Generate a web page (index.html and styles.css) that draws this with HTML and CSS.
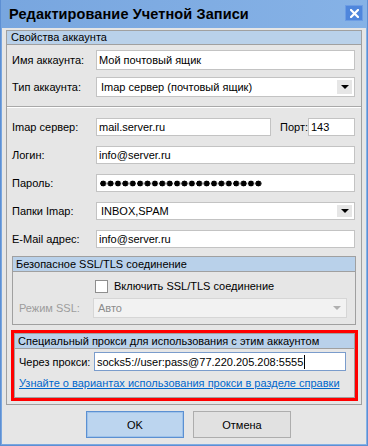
FILE: index.html
```html
<!DOCTYPE html>
<html lang="ru">
<head>
<meta charset="utf-8">
<title>Редактирование Учетной Записи</title>
<link rel="stylesheet" href="styles.css">
</head>
<body>
<div class="window">
  <div class="titlebar">
    <span class="title">Редактирование Учетной Записи</span>
    <span class="close"><svg width="9" height="9" viewBox="0 0 9 9"><path d="M1 1L8 8M8 1L1 8" stroke="#fff" stroke-width="2.2" stroke-linecap="square"/></svg></span>
  </div>
  <div class="client">
    <div class="group outer">
      <div class="group-head">Свойства аккаунта</div>
      <div class="group-body">
        <div class="row tall first"><span class="lbl">Имя аккаунта:</span><div class="field grow">Мой почтовый ящик</div></div>
        <div class="row tall second"><span class="lbl">Тип аккаунта:</span><div class="field grow select"><span class="val">Imap сервер (почтовый ящик)</span><span class="arrow"></span></div></div>
        <div class="sep"></div>
        <div class="row after-sep"><span class="lbl">Imap сервер:</span><div class="field server">mail.server.ru</div><span class="port-lbl">Порт:</span><div class="field port">143</div></div>
        <div class="row"><span class="lbl">Логин:</span><div class="field grow">info@server.ru</div></div>
        <div class="row"><span class="lbl">Пароль:</span><div class="field grow"><span class="dots"></span></div></div>
        <div class="row"><span class="lbl">Папки Imap:</span><div class="field grow select"><span class="val">INBOX,SPAM</span><span class="arrow"></span></div></div>
        <div class="row"><span class="lbl">E-Mail адрес:</span><div class="field grow">info@server.ru</div></div>

        <div class="group ssl">
          <div class="group-head">Безопасное SSL/TLS соединение</div>
          <div class="check-row"><span class="checkbox"></span><span>Включить SSL/TLS соединение</span></div>
          <div class="ssl-row"><span class="lbl-ssl">Режим SSL:</span><div class="field grow select disabled"><span class="val">Авто</span><span class="arrow"></span></div></div>
        </div>

        <div class="group proxy">
          <div class="group-head">Специальный прокси для использования с этим аккаунтом</div>
          <div class="proxy-row"><span class="lbl-proxy">Через прокси:</span><div class="field grow focused">socks5://user:pass@77.220.205.208:5555<span class="caret"></span></div></div>
          <a class="help-link" href="#">Узнайте о вариантах использования прокси в разделе справки</a>
        </div>
      </div>
    </div>
    <div class="buttons">
      <button class="btn default">OK</button>
      <button class="btn">Отмена</button>
    </div>
  </div>
</div>
</body>
</html>
```

FILE: styles.css
```css
* { box-sizing: border-box; }
html, body { margin: 0; padding: 0; }
body {
  width: 368px;
  height: 446px;
  overflow: hidden;
  font-family: "Liberation Sans", Arial, sans-serif;
  font-size: 11px;
  color: #000;
  background: #7eabe1;
}
.window {
  width: 368px;
  height: 446px;
  display: flex;
  flex-direction: column;
  background: linear-gradient(90deg, #78a6df, #86b2e6);
  border: 1px solid #5d8fd3;
  border-top: none;
}
.titlebar {
  height: 28px;
  display: flex;
  align-items: flex-start;
  padding-left: 8px;
}
.title {
  font-weight: bold;
  font-size: 14.5px;
  line-height: 16px;
  margin-top: 6px;
  color: #000;
  letter-spacing: 0.1px;
}
.close {
  margin-left: auto;
  margin-right: 4px;
  margin-top: 5px;
  width: 18px;
  height: 16px;
  background: #4f86dc;
  border: 1px solid #6d9de4;
  display: flex;
  align-items: center;
  justify-content: center;
}
.client {
  flex: 1;
  margin: 0 1px 1px 1px;
  background: #e6e6e6;
  padding: 2px 4px 0 4px;
  display: flex;
  flex-direction: column;
}
.group {
  border: 1px solid #a0a0a0;
}
.group-head {
  height: 14px;
  line-height: 13px;
  background: #b9d1ea;
  border-bottom: 1px solid #a0a0a0;
  padding-left: 4px;
  white-space: nowrap;
}
.group-body {
  padding: 0 6px 6px 5px;
}
.row {
  display: flex;
  align-items: center;
  height: 18px;
  margin-top: 10px;
}
.row.tall { height: 20px; }
.row.first { margin-top: 5px; }
.row.second { margin-top: 7px; }
.row.after-sep { margin-top: 10px; }
.lbl {
  width: 84px;
  flex: none;
}
.field {
  height: 100%;
  background: #fff;
  border: 1px solid #c3c3c3;
  padding-left: 2px;
  display: flex;
  align-items: center;
  white-space: nowrap;
  overflow: hidden;
}
.grow { flex: 1; }
.server { width: 175px; flex: none; }
.port-lbl { margin-left: 9px; }
.port { width: 47px; margin-left: auto; flex: none; }
.select { padding-left: 4px; padding-right: 1px; }
.select .val { flex: 1; }
.arrow {
  width: 15px;
  align-self: stretch;
  margin: 2px 1px 2px 0;
  background: #e6e6e6;
  position: relative;
}
.arrow::after {
  content: "";
  position: absolute;
  left: 4px;
  top: 50%;
  margin-top: -2px;
  border-left: 4px solid transparent;
  border-right: 4px solid transparent;
  border-top: 4px solid #000;
}
.sep {
  margin: 9px -6px 0 -5px;
  height: 2px;
  border-top: 1px solid #a9a9a9;
  border-bottom: 1px solid #fff;
}
.dots {
  width: 162px;
  height: 7px;
  margin-left: 1px;
  background: radial-gradient(circle at 3.2px 3.5px, #000 2.7px, transparent 3.2px) 0 0 / 7.4px 7px repeat-x;
}
.ssl {
  margin-top: 8px;
  margin-right: -1px;
  padding-bottom: 6px;
}
.ssl .group-head { height: 15px; line-height: 14px; padding-left: 3px; }
.check-row {
  display: flex;
  align-items: center;
  margin-top: 7px;
  padding-left: 82px;
  height: 14px;
}
.checkbox {
  width: 13px;
  height: 13px;
  background: #fff;
  border: 1px solid #8e8e8e;
  margin-right: 6px;
}
.ssl-row {
  display: flex;
  align-items: center;
  height: 20px;
  margin-top: 5px;
  padding-left: 6px;
  padding-right: 8px;
}
.lbl-ssl { width: 74px; color: #9d9d9d; flex: none; }
.disabled {
  background: #f2f2f2;
  border-color: #d6d6d6;
  color: #8c8c8c;
}
.disabled .arrow { background: transparent; }
.disabled .arrow::after { border-top-color: #b0b0b0; }
.proxy {
  margin: 8px 0 0 2px;
  outline: 3px solid #ff0000;
  padding-bottom: 7px;
}
.proxy .group-head { height: 15px; line-height: 14px; padding-left: 3px; }
.proxy-row {
  display: flex;
  align-items: center;
  height: 19px;
  margin-top: 3px;
  padding-left: 4px;
  padding-right: 8px;
}
.lbl-proxy { width: 75px; flex: none; }
.focused { border-color: #7a9ccc; }
.caret {
  display: inline-block;
  width: 1px;
  height: 14px;
  background: #000;
  margin-left: 1px;
}
.help-link {
  display: block;
  margin-top: 6px;
  padding-left: 4px;
  line-height: 13px;
  color: #0066cc;
  text-decoration: underline;
  white-space: nowrap;
}
.buttons {
  display: flex;
  gap: 9px;
  margin-top: 6px;
  padding-left: 80px;
}
.btn {
  width: 98px;
  height: 27px;
  font-family: "Liberation Sans", Arial, sans-serif;
  font-size: 11px;
  color: #000;
  background: #e1e1e1;
  border: 1px solid #adadad;
  padding: 0;
}
.btn.default {
  background: #bcd5ef;
  border: 1px solid #5b90d2;
  box-shadow: inset 0 0 0 1px #9fc3ea;
}
```
